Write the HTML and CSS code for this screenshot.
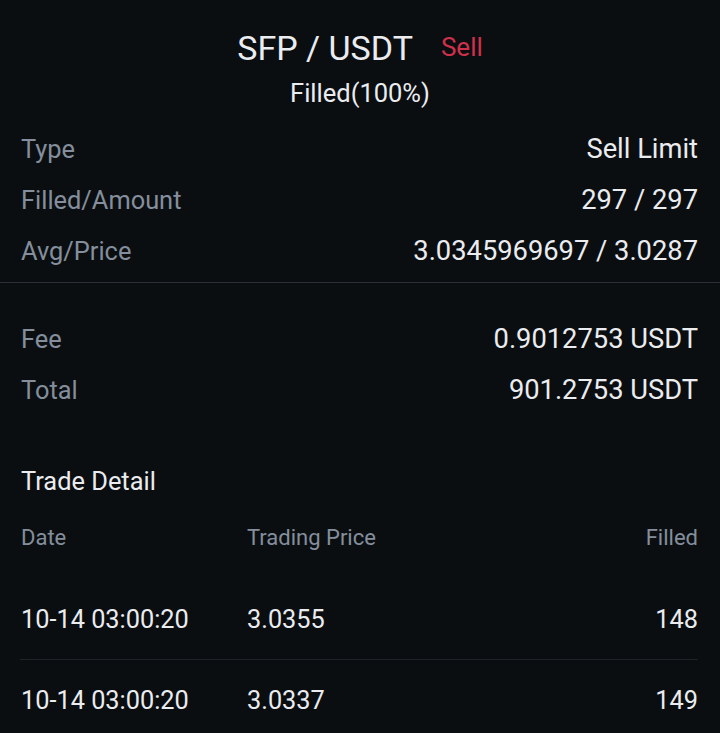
FILE: index.html
```html
<!DOCTYPE html>
<html>
<head>
<meta charset="utf-8">
<link rel="stylesheet" href="styles.css">
</head>
<body>
<div class="page">
  <header class="head">
    <div class="title-line">
      <span class="pair">SFP / USDT</span>
      <span class="side">Sell</span>
    </div>
    <div class="status">Filled(100%)</div>
  </header>

  <section class="info first">
    <div class="row"><span class="label">Type</span><span class="value">Sell Limit</span></div>
    <div class="row"><span class="label">Filled/Amount</span><span class="value">297 / 297</span></div>
    <div class="row"><span class="label">Avg/Price</span><span class="value">3.0345969697 / 3.0287</span></div>
  </section>

  <div class="divider"></div>

  <section class="info second">
    <div class="row"><span class="label">Fee</span><span class="value">0.9012753 USDT</span></div>
    <div class="row"><span class="label">Total</span><span class="value">901.2753 USDT</span></div>
  </section>

  <section class="trades">
    <h2 class="trades-title">Trade Detail</h2>
    <div class="grid head-row">
      <span>Date</span><span>Trading Price</span><span class="right">Filled</span>
    </div>
    <div class="grid trade-row">
      <span>10-14 03:00:20</span><span>3.0355</span><span class="right">148</span>
    </div>
    <div class="grid trade-row sep">
      <span>10-14 03:00:20</span><span>3.0337</span><span class="right">149</span>
    </div>
  </section>
</div>
</body>
</html>
```

FILE: styles.css
```css
html, body {
  margin: 0;
  padding: 0;
  background: #0b0e11;
}
body {
  font-family: Roboto, "Noto Sans", sans-serif;
  color: #eaecef;
  overflow: hidden;
}
.page {
  width: 720px;
  height: 733px;
}
.head {
  padding-top: 29px;
  display: flex;
  flex-direction: column;
  align-items: center;
}
.title-line {
  display: flex;
  align-items: center;
  gap: 28px;
  height: 38px;
}
.pair {
  font-size: 34px;
  line-height: 38px;
  color: #eaecef;
}
.side {
  font-size: 26px;
  line-height: 38px;
  color: #cf304a;
  position: relative;
  top: -1px;
}
.status {
  margin-top: 11px;
  font-size: 25.5px;
  line-height: 30px;
}
.info {
  padding: 0 22px 0 21px;
}
.info.first {
  margin-top: 15px;
}
.info.second {
  margin-top: 30px;
}
.row {
  height: 51px;
  display: flex;
  justify-content: space-between;
  align-items: center;
}
.label {
  color: #848e9c;
  font-size: 25.4px;
}
.value {
  color: #eaecef;
  font-size: 27.3px;
}
.divider {
  margin-top: 6px;
  height: 1px;
  background: #2b3139;
}
.trades {
  padding: 0 22px 0 21px;
  margin-top: 51px;
}
.trades-title {
  margin: 0;
  font-weight: 400;
  font-size: 25.4px;
  line-height: 30px;
  color: #eaecef;
}
.grid {
  display: grid;
  grid-template-columns: 226px 1fr auto;
  align-items: center;
}
.head-row {
  margin-top: 21px;
  height: 40px;
  font-size: 22px;
  color: #848e9c;
}
.trade-row {
  height: 80px;
  font-size: 25.3px;
  color: #eaecef;
}
.head-row + .trade-row {
  margin-top: 22px;
}
.trade-row.sep {
  border-top: 1px solid #1e2329;
  margin-left: -1px;
  padding-left: 1px;
}
.right {
  text-align: right;
}
```
